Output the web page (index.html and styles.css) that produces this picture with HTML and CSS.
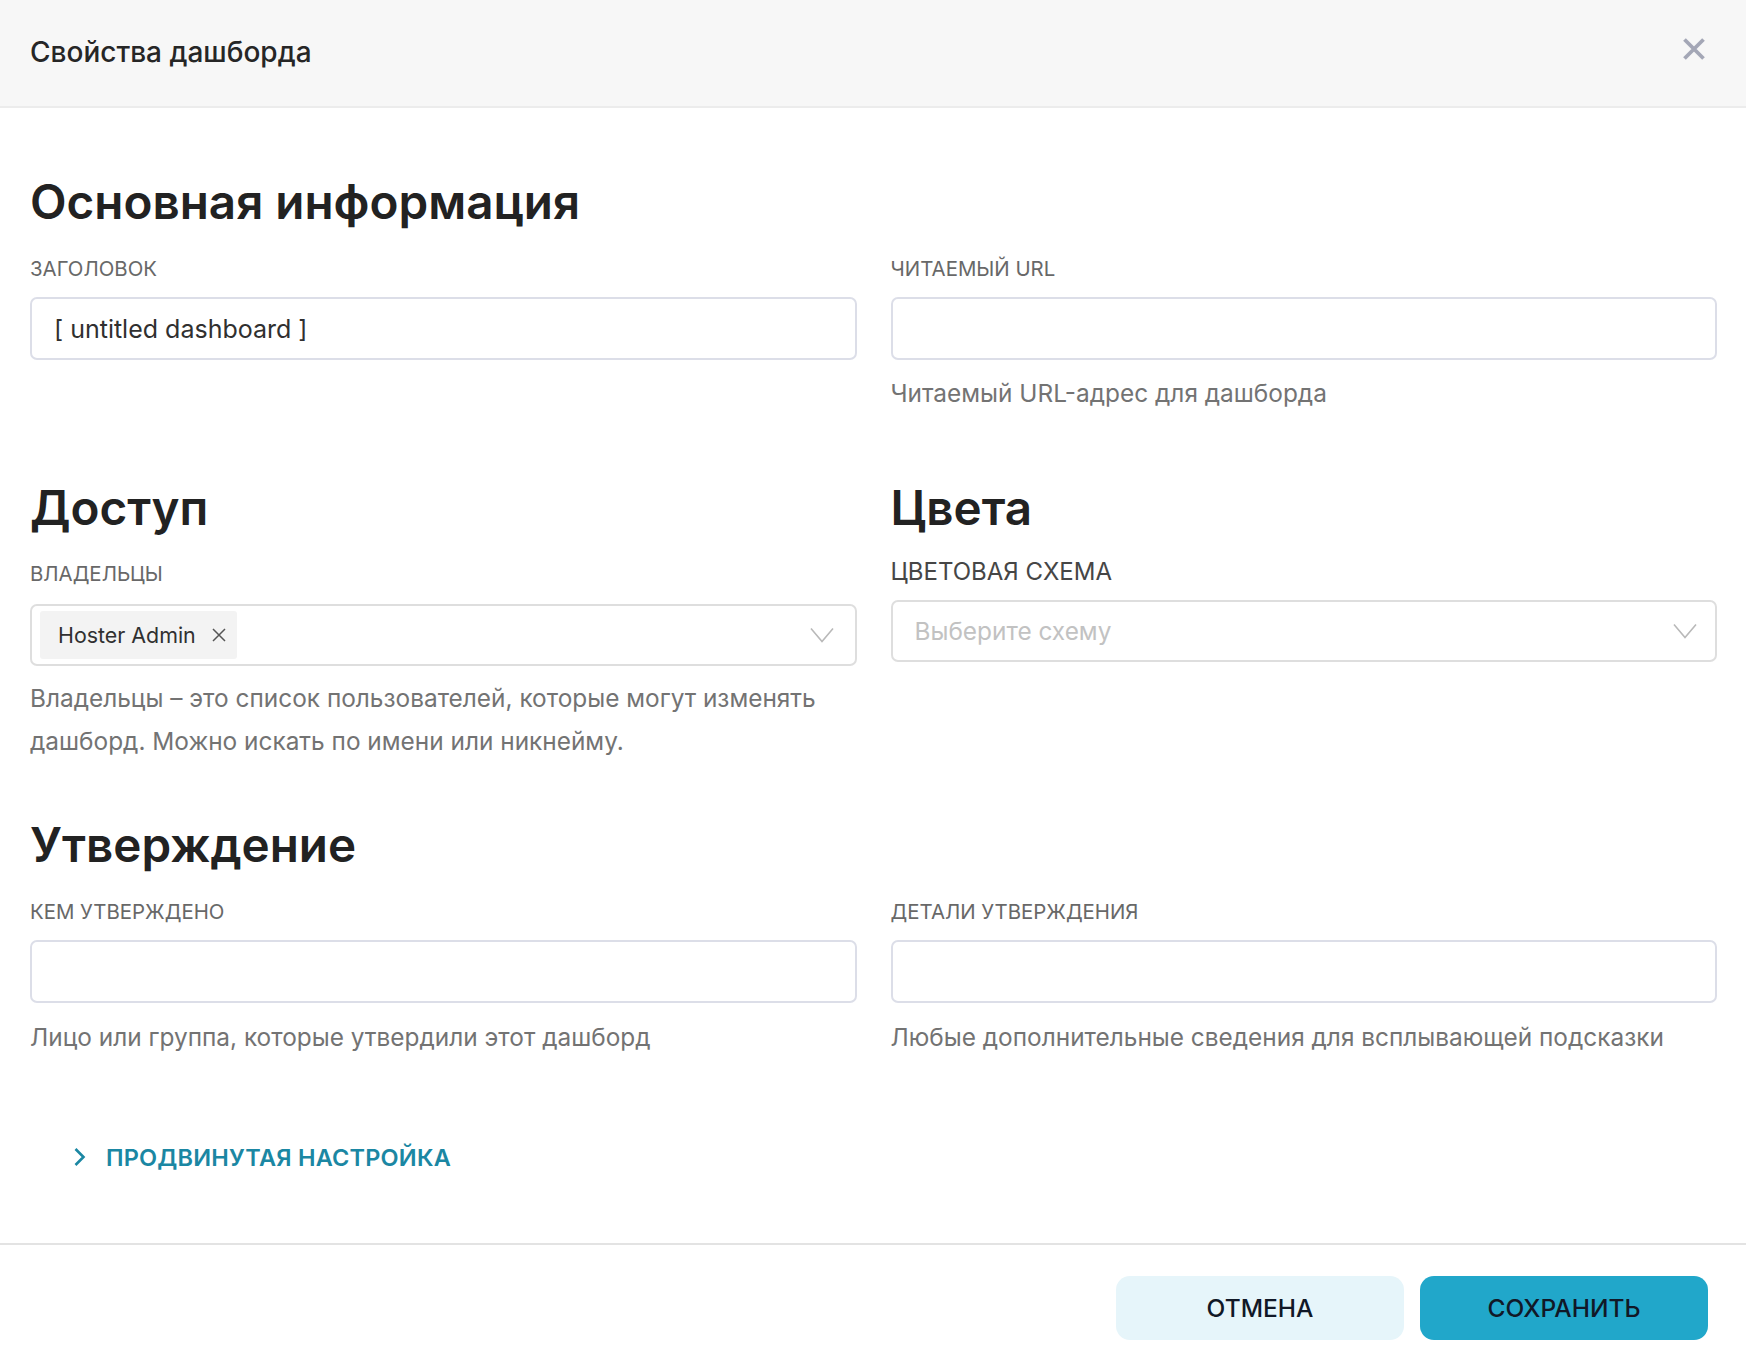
FILE: index.html
```html
<!DOCTYPE html>
<html lang="ru">
<head>
<meta charset="utf-8">
<title>Свойства дашборда</title>
<link rel="stylesheet" href="styles.css">
</head>
<body>
<div class="modal">
  <header class="modal-header">
    <h1 class="modal-title">Свойства дашборда</h1>
    <button class="close-btn" aria-label="Закрыть">
      <svg width="24" height="24" viewBox="0 0 24 24"><path d="M2.5 2.5 L21.5 21.5 M21.5 2.5 L2.5 21.5" stroke="#a4a7b6" stroke-width="3.8" fill="none"/></svg>
    </button>
  </header>

  <main class="modal-body">
    <section class="section section-basic">
      <h2 class="section-title">Основная информация</h2>
      <div class="row">
        <div class="field">
          <label class="field-label">Заголовок</label>
          <div class="input"><span class="input-value">[ untitled dashboard ]</span></div>
        </div>
        <div class="field">
          <label class="field-label">Читаемый URL</label>
          <div class="input"></div>
          <p class="help help-url">Читаемый URL-адрес для дашборда</p>
        </div>
      </div>
    </section>

    <div class="row section section-access">
      <div class="field">
        <h2 class="section-title">Доступ</h2>
        <label class="field-label">Владельцы</label>
        <div class="select select-owners">
          <span class="chip">Hoster Admin
            <svg class="chip-x" width="14" height="14" viewBox="0 0 14 14"><path d="M1 1 L13 13 M13 1 L1 13" stroke="#555" stroke-width="1.5" fill="none"/></svg>
          </span>
          <svg class="chevron-down" width="24" height="16" viewBox="0 0 24 16"><path d="M1 1.5 L12 14.5 L23 1.5" stroke="#b9b9b9" stroke-width="1.6" fill="none"/></svg>
        </div>
        <p class="help help-owners">Владельцы – это список пользователей, которые могут изменять дашборд. Можно искать по имени или никнейму.</p>
      </div>
      <div class="field">
        <h2 class="section-title">Цвета</h2>
        <label class="field-label field-label-strong">Цветовая схема</label>
        <div class="select select-colors">
          <span class="placeholder">Выберите схему</span>
          <svg class="chevron-down" width="24" height="16" viewBox="0 0 24 16"><path d="M1 1.5 L12 14.5 L23 1.5" stroke="#b9b9b9" stroke-width="1.6" fill="none"/></svg>
        </div>
      </div>
    </div>

    <section class="section section-approval">
      <h2 class="section-title">Утверждение</h2>
      <div class="row">
        <div class="field">
          <label class="field-label">Кем утверждено</label>
          <div class="input"></div>
          <p class="help help-approval">Лицо или группа, которые утвердили этот дашборд</p>
        </div>
        <div class="field">
          <label class="field-label">Детали утверждения</label>
          <div class="input"></div>
          <p class="help help-approval">Любые дополнительные сведения для всплывающей подсказки</p>
        </div>
      </div>
    </section>

    <div class="advanced">
      <svg class="advanced-chevron" width="14" height="20" viewBox="0 0 14 20"><path d="M2.5 2 L10.5 10 L2.5 18" stroke="#1b87a3" stroke-width="2.6" fill="none"/></svg>
      <span class="advanced-text">Продвинутая настройка</span>
    </div>
  </main>

  <footer class="modal-footer">
    <button class="btn btn-cancel">Отмена</button>
    <button class="btn btn-save">Сохранить</button>
  </footer>
</div>
</body>
</html>
```

FILE: styles.css
```css
* { box-sizing: border-box; }

html, body {
  margin: 0;
  padding: 0;
  background: #ffffff;
}

body {
  font-family: Inter, "Noto Sans", "Liberation Sans", sans-serif;
  color: #222;
}

.modal {
  width: 1746px;
  height: 1368px;
  display: flex;
  flex-direction: column;
  background: #fff;
}

.modal-header {
  height: 108px;
  flex: none;
  background: #f7f7f7;
  border-bottom: 2px solid #ececec;
  display: flex;
  align-items: center;
  justify-content: space-between;
  padding: 0 40px 8px 30px;
}

.modal-title {
  margin: 0;
  font-size: 28px;
  font-weight: 500;
  color: #262626;
  line-height: 36px;
  position: relative;
  top: 3px;
}

.close-btn {
  border: 0;
  background: transparent;
  padding: 0;
  width: 24px;
  height: 24px;
  display: flex;
}

.modal-body {
  flex: 1;
  padding: 65px 29px 0 30px;
}

.section-title {
  margin: 0;
  font-size: 47.6px;
  line-height: 58px;
  font-weight: 600;
  color: #222;
}

.row {
  display: grid;
  grid-template-columns: 1fr 1fr;
  column-gap: 34px;
  align-items: start;
}

.field {
  display: flex;
  flex-direction: column;
}

.field-label {
  display: block;
  margin-top: 25.5px;
  font-size: 20.4px;
  line-height: 24px;
  text-transform: uppercase;
  color: #686868;
}

.field-label-strong {
  margin-top: 23.5px;
  font-size: 24px;
  color: #464646;
}

.input {
  margin-top: 16.5px;
  height: 63px;
  border: 2px solid #dcdee8;
  border-radius: 7px;
  background: #fff;
  display: flex;
  align-items: center;
  padding: 0 22px;
}

.input-value {
  font-size: 25px;
  color: #303030;
}

.help {
  margin: 11px 0 0;
  font-size: 24.4px;
  line-height: 43px;
  color: #737373;
}

.help-url {
  margin-top: 11.5px;
}

.help-approval {
  margin-top: 13px;
}

.section-access {
  margin-top: 64px;
}

.select {
  margin-top: 18px;
  height: 62px;
  border: 2px solid #dedede;
  border-radius: 7px;
  background: #fff;
  display: flex;
  align-items: center;
  justify-content: space-between;
  padding: 0 21px 0 8px;
}

.select-colors {
  margin-top: 15.5px;
  padding-left: 22px;
  padding-right: 18px;
}

.chip {
  height: 48px;
  display: inline-flex;
  align-items: center;
  gap: 16px;
  padding: 0 11px 0 18px;
  background: #f3f3f3;
  border-radius: 3px;
  font-size: 21.4px;
  color: #303030;
}

.chip-x { display: block; }

.placeholder {
  font-size: 24.4px;
  color: #c2c2c2;
}

.chevron-down { display: block; }

.section-approval {
  margin-top: 53px;
}

.advanced {
  margin-top: 83px;
  padding-left: 43px;
  display: flex;
  align-items: center;
  gap: 19px;
  height: 30px;
}

.advanced-chevron { display: block; }

.advanced-text {
  font-size: 23.5px;
  font-weight: 600;
  color: #1b87a3;
  text-transform: uppercase;
  letter-spacing: 0.2px;
}

.modal-footer {
  flex: none;
  height: 125px;
  border-top: 2px solid #e3e3e3;
  display: flex;
  justify-content: flex-end;
  align-items: flex-start;
  gap: 16px;
  padding: 31px 38px 0 0;
}

.btn {
  width: 288px;
  height: 64px;
  border: 0;
  border-radius: 14px;
  font-family: Inter, "Noto Sans", "Liberation Sans", sans-serif;
  font-size: 24.5px;
  font-weight: 500;
  text-transform: uppercase;
  color: #111827;
  cursor: pointer;
}

.btn-cancel { background: #e6f5fa; }

.btn-save { background: #21a7ca; }
```
